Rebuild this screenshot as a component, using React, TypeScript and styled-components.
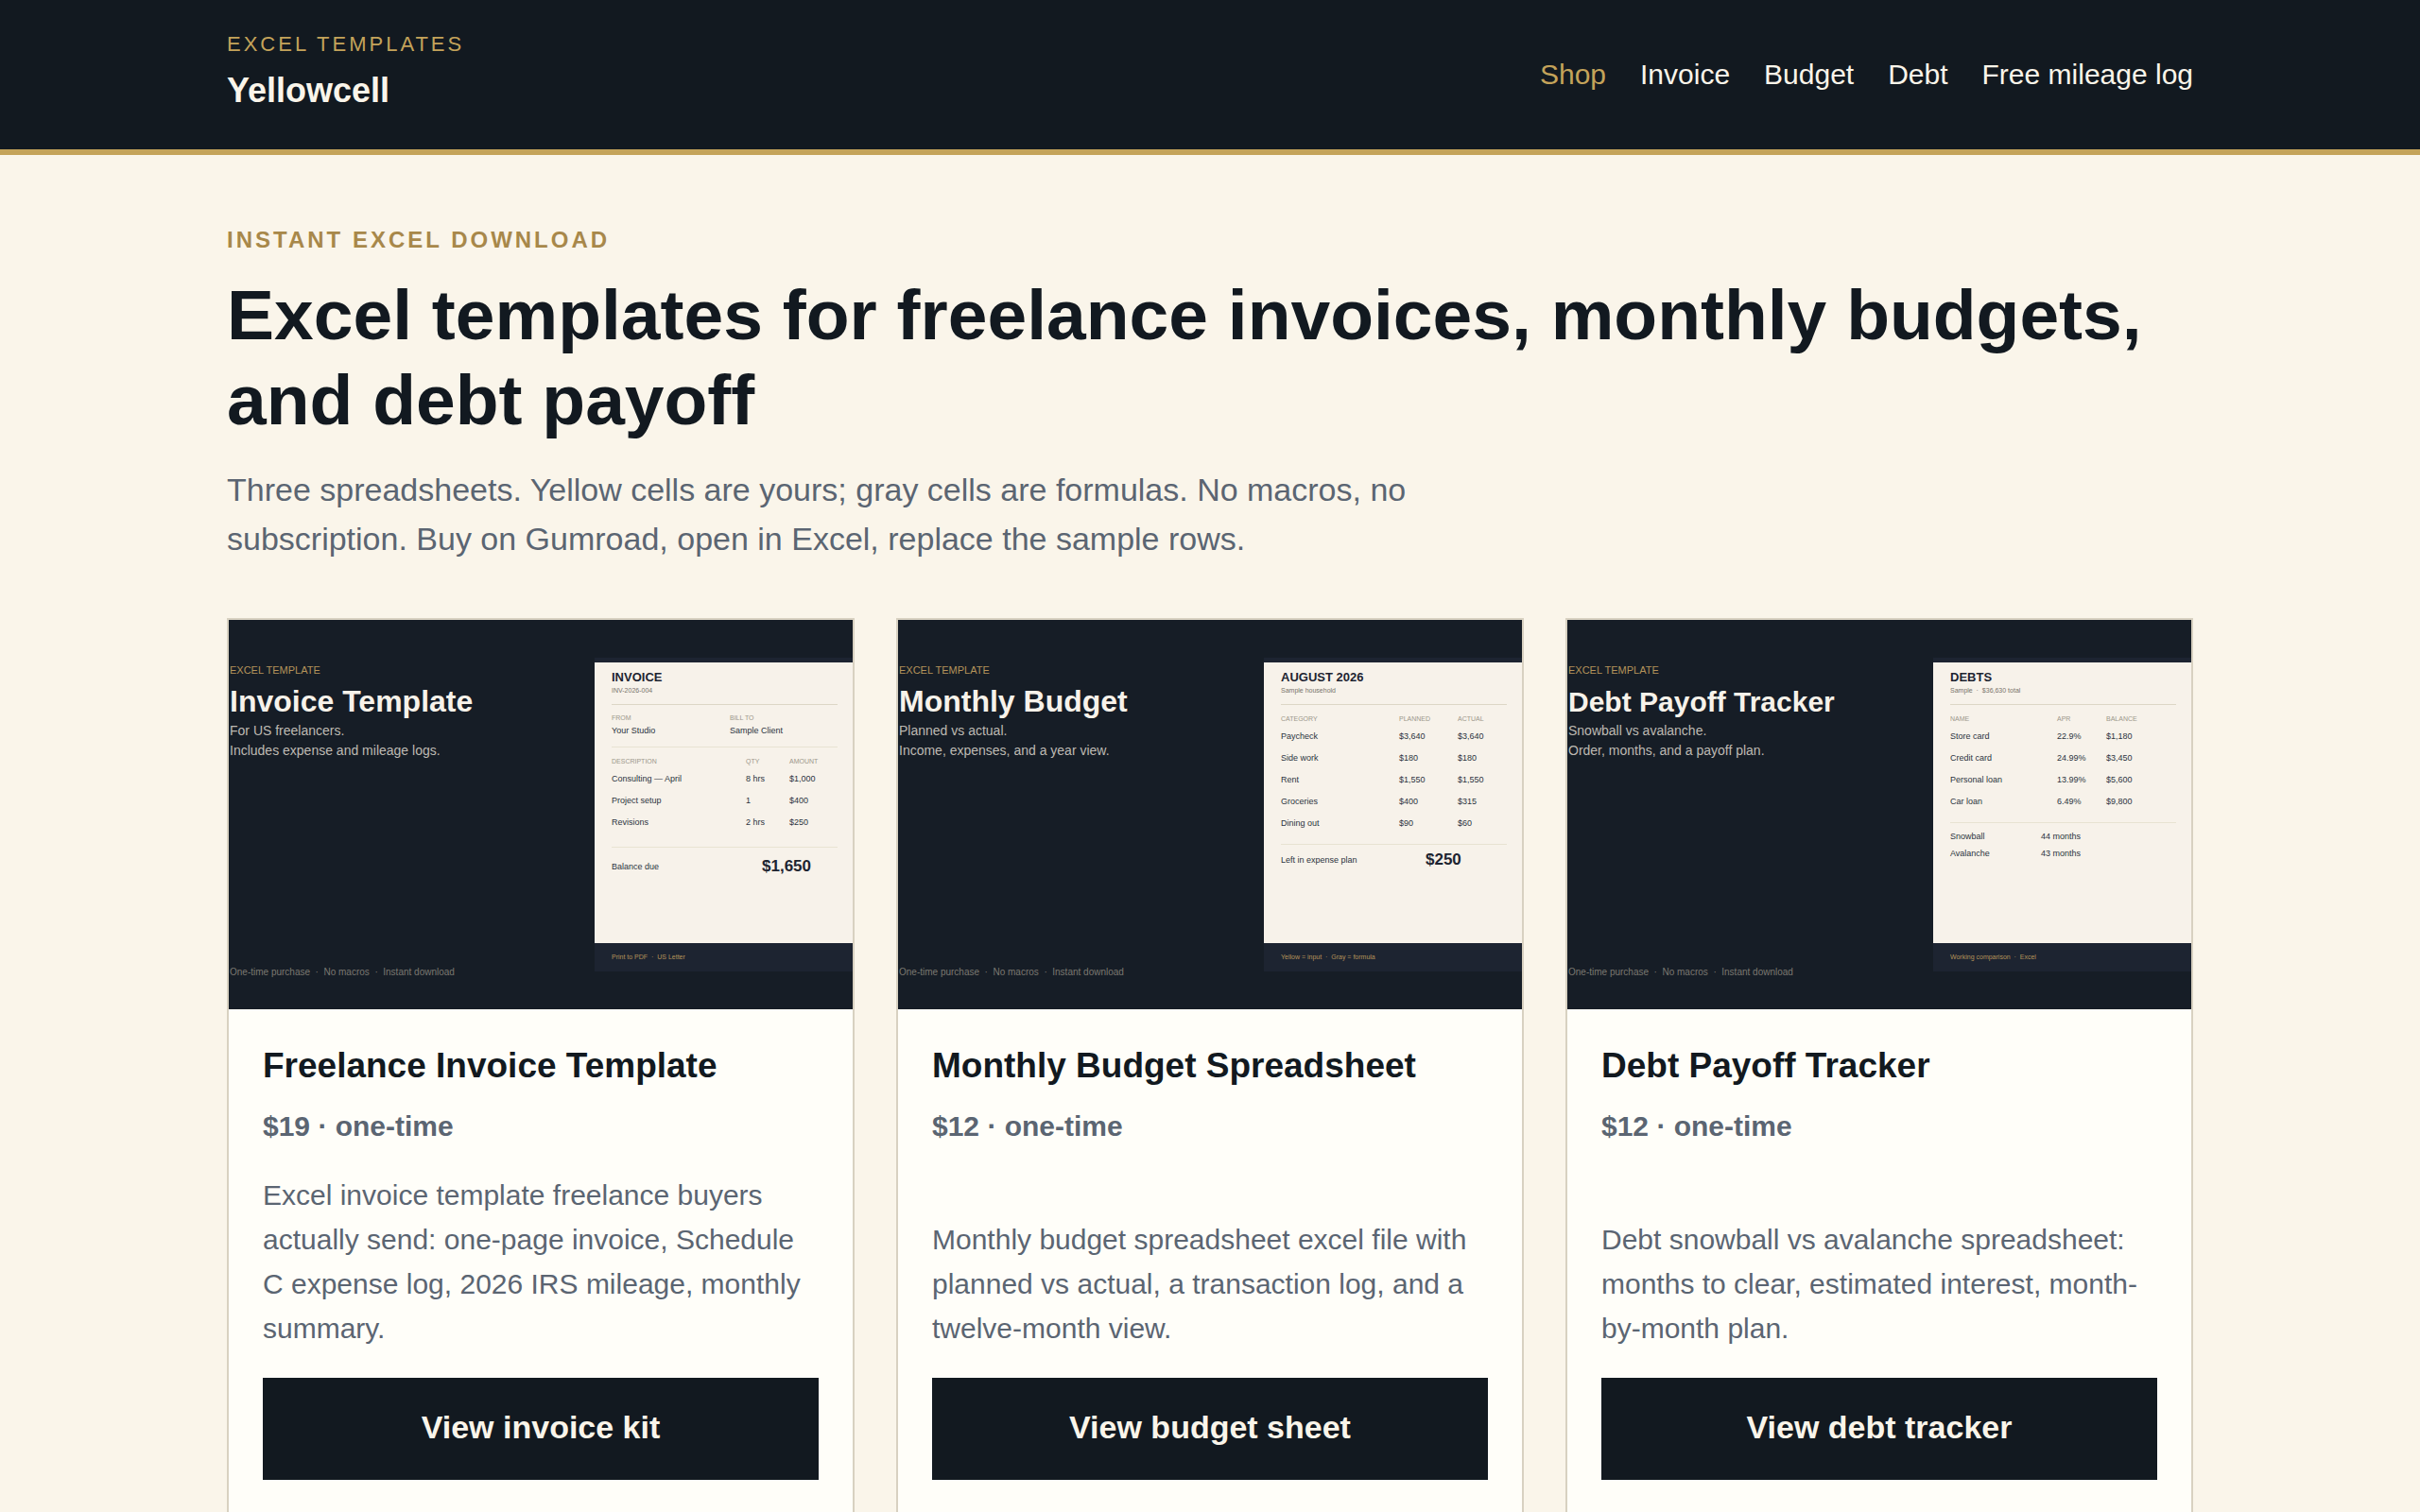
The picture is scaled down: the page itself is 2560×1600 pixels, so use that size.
import React from "react";
import styled, { createGlobalStyle } from "styled-components";

const color = {
  ink: "#121920",
  cream: "#faf5ea",
  gold: "#c4a35a",
  goldDeep: "#a8884a",
  slate: "#5b6572",
  line: "#d8d1c1",
  card: "#fffef9",
  cover: "#161d26",
  panel: "#1d2431",
  paper: "#f7f2ea",
};

const GlobalStyle = createGlobalStyle`
  *, *::before, *::after { box-sizing: border-box; }
  body {
    margin: 0;
    background: ${color.cream};
    color: ${color.ink};
    font-family: "Liberation Sans", Arial, sans-serif;
    font-size: 30px;
    line-height: 47px;
  }
  h1, h2, p { margin: 0; }
  a { color: inherit; text-decoration: none; }
`;

const Wrap = styled.div`
  width: min(2080px, 100% - 96px);
  margin: 0 auto;
`;

const Header = styled.header`
  background: ${color.ink};
  color: ${color.cream};
  border-bottom: 6px solid ${color.gold};
  padding: 28px 0;
`;

const HeaderRow = styled(Wrap)`
  display: flex;
  flex-wrap: wrap;
  align-items: center;
  justify-content: space-between;
  gap: 24px;
`;

const Brand = styled.div`
  display: flex;
  flex-direction: column;
  gap: 2px;
  padding-bottom: 6px;
`;

const BrandTag = styled.span`
  color: ${color.gold};
  font-size: 22px;
  line-height: 38px;
  letter-spacing: 3px;
  text-transform: uppercase;
`;

const BrandName = styled.a`
  font-size: 36px;
  line-height: 56px;
  font-weight: 700;
`;

const Nav = styled.nav`
  display: flex;
  flex-wrap: wrap;
  gap: 36px;
  padding-bottom: 2px;
`;

const NavLink = styled.a<{ $active?: boolean }>`
  color: ${(p) => (p.$active ? color.gold : color.cream)};
`;

const Main = styled.main`
  padding: 72px 0;
`;

const Eyebrow = styled.p`
  color: ${color.goldDeep};
  font-size: 24px;
  line-height: 36px;
  font-weight: 700;
  letter-spacing: 3px;
  text-transform: uppercase;
`;

const Headline = styled.h1`
  margin: 16px 0 24px;
  font-size: 75px;
  line-height: 90px;
`;

const Lead = styled.p`
  max-width: 1280px;
  color: ${color.slate};
  font-size: 34px;
  line-height: 52px;
`;

const Grid = styled.div`
  display: grid;
  grid-template-columns: repeat(3, minmax(0, 1fr));
  gap: 44px;
  margin-top: 58px;
`;

const Card = styled.article`
  display: flex;
  flex-direction: column;
  background: ${color.card};
  border: 2px solid ${color.line};
`;

const CardBody = styled.div`
  flex: 1;
  display: flex;
  flex-direction: column;
  padding: 36px;
`;

const CardTitle = styled.h2`
  font-size: 37px;
  line-height: 48px;
`;

const Price = styled.p`
  margin: 16px 0 26px;
  color: ${color.slate};
  font-weight: 700;
`;

const Blurb = styled.p`
  margin: auto 0 29px;
  color: ${color.slate};
`;

const CardButton = styled.a`
  padding: 26px 28px 30px;
  background: ${color.ink};
  color: ${color.cream};
  font-size: 34px;
  line-height: 52px;
  font-weight: 700;
  text-align: center;
`;

/* Product cover */

const Cover = styled.div`
  display: flex;
  justify-content: space-between;
  height: 412px;
  overflow: hidden;
  background: ${color.cover};
`;

const CoverCopy = styled.div`
  display: flex;
  flex-direction: column;
  padding: 46px 0 33px 1px;
  white-space: nowrap;
`;

const CoverTag = styled.p`
  color: #b4935a;
  font-size: 11px;
  line-height: 14px;
`;

const CoverTitle = styled.p<{ $size: number }>`
  margin: 8px 0 2px;
  color: ${color.paper};
  font-size: ${(p) => p.$size}px;
  line-height: 37px;
  font-weight: 700;
`;

const CoverLine = styled.p`
  color: #bebab3;
  font-size: 14px;
  line-height: 21px;
`;

const CoverNote = styled.p`
  margin-top: auto;
  color: #7b7871;
  font-size: 10px;
  line-height: 12px;
`;

const Panel = styled.div`
  display: flex;
  flex-direction: column;
  width: 273px;
  margin: 40px 0;
  border-top: 5px solid ${color.panel};
  background: ${color.paper};
  color: #2b3340;
  font-size: 9px;
  line-height: 12px;
`;

const Sheet = styled.div`
  flex: 1;
  padding: 8px 16px 0 18px;
`;

const SheetHead = styled.div`
  padding-bottom: 8px;
  border-bottom: 1px solid #ddd7c6;
`;

const SheetTitle = styled.p`
  color: ${color.panel};
  font-size: 13px;
  line-height: 16px;
  font-weight: 700;
`;

const SheetSub = styled.p`
  color: #77736b;
  font-size: 7px;
  line-height: 12px;
`;

const Parties = styled.div`
  display: grid;
  grid-template-columns: 125px 1fr;
  padding: 7px 0 11px;
  border-bottom: 1px solid #e8e3d2;
`;

const PartyLabel = styled.p`
  color: #9c978b;
  font-size: 7px;
  line-height: 14px;
`;

const Table = styled.table`
  width: 100%;
  margin-top: 7px;
  table-layout: fixed;
  border-collapse: collapse;

  th, td { padding: 0; text-align: left; white-space: nowrap; }
  th {
    color: #9c978b;
    font-size: 7px;
    line-height: 15px;
    font-weight: 400;
  }
  td { line-height: 23px; }
`;

const Col = styled.col<{ $w?: number }>`
  width: ${(p) => (p.$w ? `${p.$w}px` : "auto")};
`;

const Summary = styled.div<{ $before: number; $after: number }>`
  margin-top: ${(p) => p.$before}px;
  padding-top: ${(p) => p.$after}px;
  border-top: 1px solid #e8e3d2;
`;

const SummaryRow = styled.div<{ $label: number; $height: number }>`
  display: grid;
  grid-template-columns: ${(p) => p.$label}px 1fr;
  align-items: center;
  line-height: ${(p) => p.$height}px;
`;

const Total = styled.strong`
  color: ${color.panel};
  font-size: 17px;
`;

const PanelFoot = styled.p`
  padding: 9px 18px;
  background: ${color.panel};
  color: #b4935a;
  font-size: 7px;
  line-height: 12px;
`;

type Product = {
  title: string;
  price: string;
  blurb: string;
  cta: string;
  cover: { title: string; size: number; lines: string[] };
  sheet: {
    title: string;
    sub: string;
    parties?: [string, string][];
    cols: [number, number];
    head: string[];
    rows: string[][];
    before: number;
    after: number;
    label: number;
    total?: [string, string];
    results?: [string, string][];
    foot: string;
  };
};

const products: Product[] = [
  {
    title: "Freelance Invoice Template",
    price: "$19 · one-time",
    blurb:
      "Excel invoice template freelance buyers actually send: one-page invoice, Schedule C expense log, 2026 IRS mileage, monthly summary.",
    cta: "View invoice kit",
    cover: {
      title: "Invoice Template",
      size: 32,
      lines: ["For US freelancers.", "Includes expense and mileage logs."],
    },
    sheet: {
      title: "INVOICE",
      sub: "INV-2026-004",
      parties: [
        ["FROM", "Your Studio"],
        ["BILL TO", "Sample Client"],
      ],
      cols: [142, 46],
      head: ["DESCRIPTION", "QTY", "AMOUNT"],
      rows: [
        ["Consulting — April", "8 hrs", "$1,000"],
        ["Project setup", "1", "$400"],
        ["Revisions", "2 hrs", "$250"],
      ],
      before: 14,
      after: 8,
      label: 159,
      total: ["Balance due", "$1,650"],
      foot: "Print to PDF \u00a0·\u00a0 US Letter",
    },
  },
  {
    title: "Monthly Budget Spreadsheet",
    price: "$12 · one-time",
    blurb:
      "Monthly budget spreadsheet excel file with planned vs actual, a transaction log, and a twelve-month view.",
    cta: "View budget sheet",
    cover: {
      title: "Monthly Budget",
      size: 32,
      lines: ["Planned vs actual.", "Income, expenses, and a year view."],
    },
    sheet: {
      title: "AUGUST 2026",
      sub: "Sample household",
      cols: [125, 62],
      head: ["CATEGORY", "PLANNED", "ACTUAL"],
      rows: [
        ["Paycheck", "$3,640", "$3,640"],
        ["Side work", "$180", "$180"],
        ["Rent", "$1,550", "$1,550"],
        ["Groceries", "$400", "$315"],
        ["Dining out", "$90", "$60"],
      ],
      before: 10,
      after: 4,
      label: 153,
      total: ["Left in expense plan", "$250"],
      foot: "Yellow = input \u00a0·\u00a0 Gray = formula",
    },
  },
  {
    title: "Debt Payoff Tracker",
    price: "$12 · one-time",
    blurb:
      "Debt snowball vs avalanche spreadsheet: months to clear, estimated interest, month-by-month plan.",
    cta: "View debt tracker",
    cover: {
      title: "Debt Payoff Tracker",
      size: 30,
      lines: ["Snowball vs avalanche.", "Order, months, and a payoff plan."],
    },
    sheet: {
      title: "DEBTS",
      sub: "Sample \u00a0·\u00a0 $36,630 total",
      cols: [113, 52],
      head: ["NAME", "APR", "BALANCE"],
      rows: [
        ["Store card", "22.9%", "$1,180"],
        ["Credit card", "24.99%", "$3,450"],
        ["Personal loan", "13.99%", "$5,600"],
        ["Car loan", "6.49%", "$9,800"],
      ],
      before: 10,
      after: 5,
      label: 96,
      results: [
        ["Snowball", "44 months"],
        ["Avalanche", "43 months"],
      ],
      foot: "Working comparison \u00a0·\u00a0 Excel",
    },
  },
];

function ProductCover({ cover, sheet }: Pick<Product, "cover" | "sheet">) {
  return (
    <Cover>
      <CoverCopy>
        <CoverTag>EXCEL TEMPLATE</CoverTag>
        <CoverTitle $size={cover.size}>{cover.title}</CoverTitle>
        {cover.lines.map((line) => (
          <CoverLine key={line}>{line}</CoverLine>
        ))}
        <CoverNote>
          {"One-time purchase \u00a0·\u00a0 No macros \u00a0·\u00a0 Instant download"}
        </CoverNote>
      </CoverCopy>
      <Panel>
        <Sheet>
          <SheetHead>
            <SheetTitle>{sheet.title}</SheetTitle>
            <SheetSub>{sheet.sub}</SheetSub>
          </SheetHead>
          {sheet.parties && (
            <Parties>
              {sheet.parties.map(([label, name]) => (
                <div key={label}>
                  <PartyLabel>{label}</PartyLabel>
                  <p>{name}</p>
                </div>
              ))}
            </Parties>
          )}
          <Table>
            <colgroup>
              <Col $w={sheet.cols[0]} />
              <Col $w={sheet.cols[1]} />
              <Col />
            </colgroup>
            <thead>
              <tr>
                {sheet.head.map((h) => (
                  <th key={h} scope="col">{h}</th>
                ))}
              </tr>
            </thead>
            <tbody>
              {sheet.rows.map((row) => (
                <tr key={row[0]}>
                  {row.map((cell, i) => (
                    <td key={i}>{cell}</td>
                  ))}
                </tr>
              ))}
            </tbody>
          </Table>
          <Summary $before={sheet.before} $after={sheet.after}>
            {sheet.total && (
              <SummaryRow $label={sheet.label} $height={24}>
                <span>{sheet.total[0]}</span>
                <Total>{sheet.total[1]}</Total>
              </SummaryRow>
            )}
            {sheet.results?.map(([name, value]) => (
              <SummaryRow key={name} $label={sheet.label} $height={18}>
                <span>{name}</span>
                <span>{value}</span>
              </SummaryRow>
            ))}
          </Summary>
        </Sheet>
        <PanelFoot>{sheet.foot}</PanelFoot>
      </Panel>
    </Cover>
  );
}

export default function App() {
  return (
    <>
      <GlobalStyle />
      <Header>
        <HeaderRow>
          <Brand>
            <BrandTag>Excel templates</BrandTag>
            <BrandName href="#">Yellowcell</BrandName>
          </Brand>
          <Nav aria-label="Main">
            <NavLink href="#shop" $active aria-current="page">Shop</NavLink>
            <NavLink href="#invoice">Invoice</NavLink>
            <NavLink href="#budget">Budget</NavLink>
            <NavLink href="#debt">Debt</NavLink>
            <NavLink href="#mileage">Free mileage log</NavLink>
          </Nav>
        </HeaderRow>
      </Header>
      <Main>
        <Wrap>
          <Eyebrow>Instant Excel download</Eyebrow>
          <Headline>
            Excel templates for freelance invoices, monthly budgets, and debt payoff
          </Headline>
          <Lead>
            Three spreadsheets. Yellow cells are yours; gray cells are formulas. No macros, no
            subscription. Buy on Gumroad, open in Excel, replace the sample rows.
          </Lead>
          <Grid>
            {products.map((p) => (
              <Card key={p.title}>
                <ProductCover cover={p.cover} sheet={p.sheet} />
                <CardBody>
                  <CardTitle>{p.title}</CardTitle>
                  <Price>{p.price}</Price>
                  <Blurb>{p.blurb}</Blurb>
                  <CardButton href="#">{p.cta}</CardButton>
                </CardBody>
              </Card>
            ))}
          </Grid>
        </Wrap>
      </Main>
    </>
  );
}
